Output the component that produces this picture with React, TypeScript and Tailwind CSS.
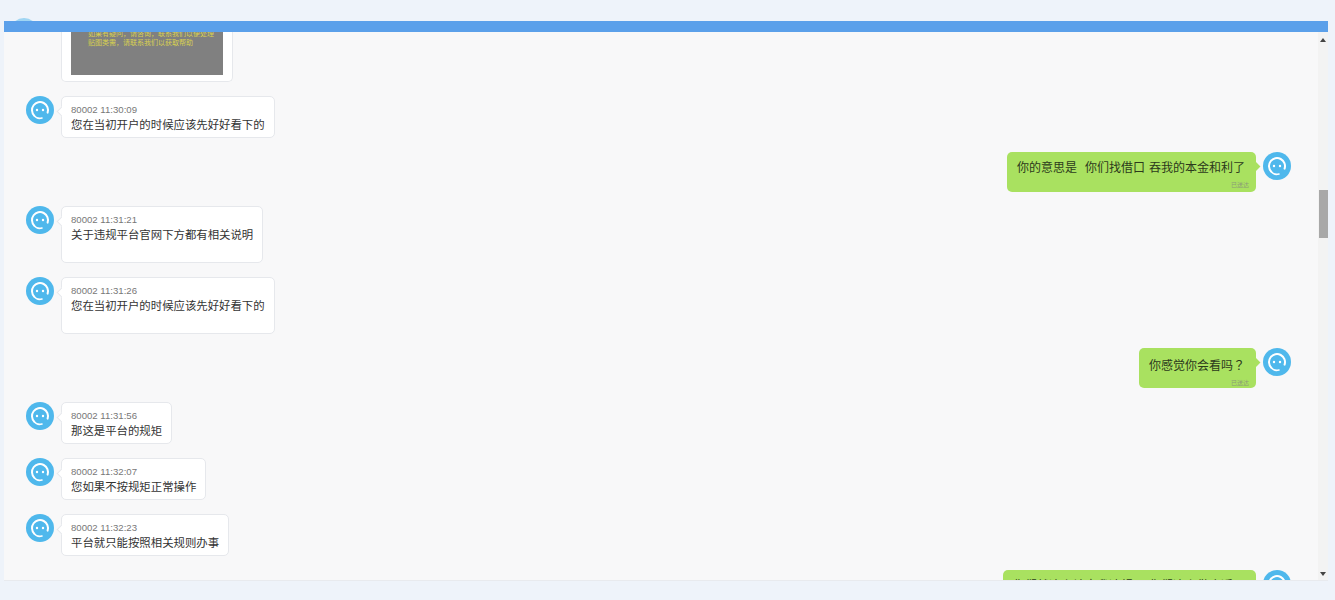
import type { ReactNode } from 'react'

const FONT = "font-['Liberation_Sans','Noto_Sans_CJK_SC',sans-serif]"

function Avatar() {
  return (
    <div className="w-7 h-7 shrink-0">
      <svg viewBox="0 0 28 28" className="w-7 h-7">
        <circle cx="14" cy="14" r="14" fill="#4fb8ec" />
        <path d="M8.2 19.6A8 8 0 1 1 21.6 16.6" fill="none" stroke="#fff" strokeWidth="2" strokeLinecap="round" />
        <path d="M8.2 19.6C9.8 21.8 13 22.8 16 22" fill="none" stroke="#fff" strokeWidth="1.6" strokeLinecap="round" />
        <circle cx="11" cy="14" r="1.2" fill="#fff" />
        <circle cx="17" cy="14" r="1.2" fill="#fff" />
      </svg>
    </div>
  )
}

function AgentMessage({ time, text, tall }: { time: string; text: string; tall?: boolean }) {
  return (
    <div className="flex items-start pl-[22px]">
      <Avatar />
      <div className="relative ml-[7px] bg-white border border-[#e6e8ec] rounded-[5px] px-[9px] pt-[6px] pb-[4px]">
        <div className="absolute -left-[4px] top-[11px] w-[7px] h-[7px] rotate-45 bg-white border-l border-b border-[#e6e8ec]" />
        <div className="text-[9.6px] leading-[14px] text-[#777]">{time}</div>
        <div className={tall ? 'text-[11.4px] leading-[16px] text-[#333] h-[31px]' : 'text-[11.4px] leading-[16px] text-[#333] h-[16px]'}>
          {text}
        </div>
      </div>
    </div>
  )
}

function MyMessage({ text, status }: { text: ReactNode; status: string }) {
  return (
    <div className="flex items-start justify-end pr-[27px]">
      <div className="relative mr-[7px] bg-[#a9e160] rounded-[5px] pl-[10px] pr-[11px] pt-[7px] h-[40px]">
        <div className="absolute -right-[3px] top-[11px] w-[7px] h-[7px] rotate-45 bg-[#a9e160]" />
        <div className="text-[12px] leading-[19px] text-[#2c3a1c] whitespace-pre [word-spacing:0.7px]">{text}</div>
        <div className="text-[6px] leading-[8px] text-[#8a9a78] text-right -mr-[4px] mt-[3px]">{status}</div>
      </div>
      <Avatar />
    </div>
  )
}

export default function App() {
  return (
    <div className={`relative h-[600px] overflow-hidden bg-[#eef3fa] pl-1 pr-[7px] pt-[21px] pb-[19px] ${FONT}`}>
      {/* avatar poking out above the header */}
      <div className="absolute left-[10px] top-[18px] w-[28px] h-[3px] overflow-hidden">
        <div className="w-[28px] h-[28px] rounded-full bg-[#4fb8ec] opacity-50" />
      </div>

      <div className="h-full flex flex-col bg-[#f8f8f9] border-b border-[#e8eaee]">
        <div className="h-[11px] shrink-0 bg-[#5ba0ea]" />
        <div className="flex-1 min-h-0 flex">
          <div className="flex-1 min-w-0 overflow-hidden flex flex-col gap-[14px]">
            {/* first card is cut by the header, scrolled away */}
            <div className="pl-[57px]">
              <div className="w-[172px] h-[50px] bg-white border border-t-0 border-[#e6e8ec] rounded-b-[5px] px-[9px] pb-[6px]">
                <div className="h-full bg-[#808080] overflow-hidden pl-[17px] text-[7px] leading-[9px] text-[#d8d050]">
                  <div className="-mt-[3px] whitespace-nowrap">如果有疑问，请咨询，联系我们以便处理</div>
                  <div className="whitespace-nowrap">贴图类需，请联系我们以获取帮助</div>
                </div>
              </div>
            </div>
            <AgentMessage time="80002 11:30:09" text="您在当初开户的时候应该先好好看下的" />
            <MyMessage text="你的意思是  你们找借口 吞我的本金和利了" status="已送达" />
            <AgentMessage time="80002 11:31:21" text="关于违规平台官网下方都有相关说明" tall />
            <AgentMessage time="80002 11:31:26" text="您在当初开户的时候应该先好好看下的" tall />
            <MyMessage
              text={<>你感觉你会看吗<span className="font-['Noto_Sans_CJK_TC',sans-serif]">？</span></>}
              status="已送达"
            />
            <AgentMessage time="80002 11:31:56" text="那这是平台的规矩" />
            <AgentMessage time="80002 11:32:07" text="您如果不按规矩正常操作" />
            <AgentMessage time="80002 11:32:23" text="平台就只能按照相关规则办事" />
            <MyMessage text="你们就这么认定我违规了 你们这么做合适吗" status="已送达" />
          </div>

          {/* scrollbar */}
          <div className="w-[10px] shrink-0 bg-[#f3f3f3] flex flex-col items-center relative">
            <div className="mt-[6px] w-0 h-0 border-l-[3px] border-r-[3px] border-b-[4px] border-l-transparent border-r-transparent border-b-[#444]" />
            <div className="mt-[148px] w-[9px] h-[48px] bg-[#a8a8a8]" />
            <div className="mt-auto mb-[4px] w-0 h-0 border-l-[3px] border-r-[3px] border-t-[4px] border-l-transparent border-r-transparent border-t-[#444]" />
          </div>
        </div>
      </div>
    </div>
  )
}
